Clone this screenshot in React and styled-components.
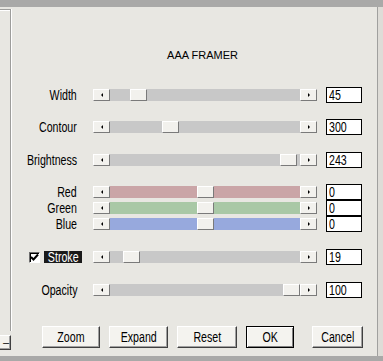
import React from 'react';
import styled, { createGlobalStyle } from 'styled-components';

const GlobalStyle = createGlobalStyle`
    html, body {
        margin: 0;
        padding: 0;
        background: #e8e7e2;
    }
    body {
        font-family: "Liberation Sans", Arial, sans-serif;
        font-size: 14px;
        color: #000;
    }
`;

const TRACK = {
    gray: '#c8c8c8',
    red: '#caa5a7',
    green: '#a9c8a6',
    blue: '#97a9dd',
};

const sliders = [
    { label: 'Width', value: 45, offset: 20, space: 0 },
    { label: 'Contour', value: 300, offset: 52, space: 16 },
    { label: 'Brightness', value: 243, offset: 170, space: 17 },
    { label: 'Red', value: 0, offset: 87, space: 16, track: 'red' },
    { label: 'Green', value: 0, offset: 87, space: 0, track: 'green' },
    { label: 'Blue', value: 0, offset: 87, space: 0, track: 'blue' },
    { label: 'Stroke', value: 19, offset: 13, space: 17, check: true },
    { label: 'Opacity', value: 100, offset: 173, space: 17 },
];

const buttons = [
    { text: 'Zoom', width: 58 },
    { text: 'Expand', width: 59 },
    { text: 'Reset', width: 60 },
    { text: 'OK', width: 48, primary: true },
    { text: 'Cancel', width: 51 },
];

export default function App() {
    return (
        <>
            <GlobalStyle />
            <Frame>
                <Strip height={7} />
                <Middle>
                    <LeftColumn>
                        <Panel />
                        <MiniButton>–</MiniButton>
                    </LeftColumn>
                    <Main>
                        <Title>AAA FRAMER</Title>
                        <Rows>
                            {sliders.map((s) => (
                                <Row key={s.label} space={s.space}>
                                    <LabelCell check={s.check}>
                                        {s.check && (
                                            <CheckBox>
                                                <svg width="9" height="9" viewBox="0 0 9 9">
                                                    <path d="M1 4 L3.5 6.5 L8 1.5" stroke="#000" strokeWidth="2" fill="none" />
                                                </svg>
                                            </CheckBox>
                                        )}
                                        {s.check ? (
                                            <Highlight>
                                                <Narrow origin="center">{s.label}</Narrow>
                                            </Highlight>
                                        ) : (
                                            <Narrow origin="right">{s.label}</Narrow>
                                        )}
                                    </LabelCell>
                                    <ScrollBar>
                                        <ArrowButton dir="left" />
                                        <Track color={TRACK[s.track || 'gray']}>
                                            <Thumb offset={s.offset} />
                                        </Track>
                                        <ArrowButton dir="right" />
                                    </ScrollBar>
                                    <ValueBox>
                                        <Narrow origin="left">{s.value}</Narrow>
                                    </ValueBox>
                                </Row>
                            ))}
                        </Rows>
                        <ButtonRow>
                            {buttons.map((b) => (
                                <Button key={b.text} width={b.width} primary={b.primary}>
                                    <Narrow origin="center">{b.text}</Narrow>
                                </Button>
                            ))}
                        </ButtonRow>
                    </Main>
                    <RightEdge />
                </Middle>
                <Strip height={5} />
            </Frame>
        </>
    );
}

const Frame = styled.div`
    width: 383px;
    height: 361px;
    display: flex;
    flex-direction: column;
    background: #e8e7e2;
    overflow: hidden;
`;

const Strip = styled.div`
    height: ${(p) => p.height}px;
    flex-shrink: 0;
    background: #a9a9a8;
`;

const Middle = styled.div`
    flex: 1;
    display: flex;
    min-height: 0;
`;

const LeftColumn = styled.div`
    width: 11px;
    display: flex;
    flex-direction: column;
    padding-top: 2px;
`;

const Panel = styled.div`
    flex: 1;
    border-top: 1px solid #9d9d9b;
    border-right: 1px solid #9d9d9b;
    box-shadow: inset 0 1px 0 #fff, 1px 0 0 #fff;
`;

const MiniButton = styled.div`
    height: 13px;
    margin: 4px 0 6px;
    background: #f3f2ee;
    border-top: 1px solid #fff;
    border-right: 1px solid #404040;
    border-bottom: 1px solid #404040;
    box-shadow: inset -1px -1px 0 #a0a0a0;
    font-size: 11px;
    line-height: 12px;
    text-align: right;
    padding-right: 1px;
`;

// the dialog font is a tall, narrow sans; squeeze Liberation Sans to match
const Narrow = styled.span`
    display: inline-block;
    white-space: nowrap;
    transform: scaleX(0.76);
    transform-origin: ${(p) => p.origin} center;
`;

const Main = styled.div`
    flex: 1;
    display: flex;
    flex-direction: column;
    padding-top: 42px;
`;

const Title = styled.div`
    font-size: 11px;
    line-height: 13px;
    margin-left: 82px;
    width: 219px;
    text-align: center;
`;

const Rows = styled.div`
    display: flex;
    flex-direction: column;
    margin-top: 25px;
`;

const Row = styled.div`
    display: flex;
    align-items: center;
    height: 16px;
    margin-top: ${(p) => p.space}px;
`;

const LabelCell = styled.div`
    width: 82px;
    box-sizing: border-box;
    display: flex;
    align-items: center;
    justify-content: flex-end;
    padding-right: ${(p) => (p.check ? 11 : 16)}px;
    line-height: 16px;
`;

const CheckBox = styled.div`
    width: 11px;
    height: 11px;
    box-sizing: border-box;
    background: #fff;
    border: 1px solid;
    border-color: #6d6d6d #fff #fff #6d6d6d;
    box-shadow: inset 1px 1px 0 #000;
    display: flex;
    align-items: center;
    justify-content: center;
    margin-right: 4px;
`;

const Highlight = styled.div`
    width: 38px;
    height: 12px;
    background: #1a1a1a;
    color: #fff;
    line-height: 12px;
    display: flex;
    justify-content: center;
`;

const ScrollBar = styled.div`
    width: 224px;
    height: 12px;
    display: flex;
`;

const raised = `
    background: #f2f1ed;
    border: 1px solid;
    border-color: #fff #7a7a7a #7a7a7a #fff;
    box-sizing: border-box;
`;

const ArrowButton = styled.div`
    ${raised}
    width: 17px;
    height: 12px;
    flex-shrink: 0;
    display: flex;
    align-items: center;
    justify-content: center;
    &::after {
        content: '';
        border-top: 2px solid transparent;
        border-bottom: 2px solid transparent;
        ${(p) => (p.dir === 'left' ? 'border-right: 2px solid #000;' : 'border-left: 2px solid #000;')}
    }
`;

const Track = styled.div`
    flex: 1;
    display: flex;
    background: ${(p) => p.color};
`;

const Thumb = styled.div`
    ${raised}
    width: 17px;
    height: 12px;
    margin-left: ${(p) => p.offset}px;
`;

const ValueBox = styled.div`
    width: 36px;
    height: 16px;
    box-sizing: border-box;
    margin-left: 9px;
    background: #fff;
    border: 1px solid #000;
    padding-left: 2px;
    line-height: 14px;
`;

const ButtonRow = styled.div`
    display: flex;
    gap: 9px;
    padding-left: 31px;
    margin-top: 28px;
`;

const Button = styled.div`
    width: ${(p) => p.width}px;
    height: 22px;
    box-sizing: border-box;
    margin-right: ${(p) => (p.primary ? 9 : 0)}px;
    background: #f4f3ef;
    border: 1px solid;
    border-color: ${(p) => (p.primary ? '#000' : '#fff #404040 #404040 #fff')};
    box-shadow: ${(p) =>
        p.primary ? 'inset 1px 1px 0 #fff, inset -1px -1px 0 #808080' : 'inset -1px -1px 0 #a0a0a0'};
    display: flex;
    align-items: center;
    justify-content: center;
    line-height: 20px;
`;

const RightEdge = styled.div`
    width: 5px;
    border-left: 1px solid #a0a09e;
    background: #dedcd7;
`;
